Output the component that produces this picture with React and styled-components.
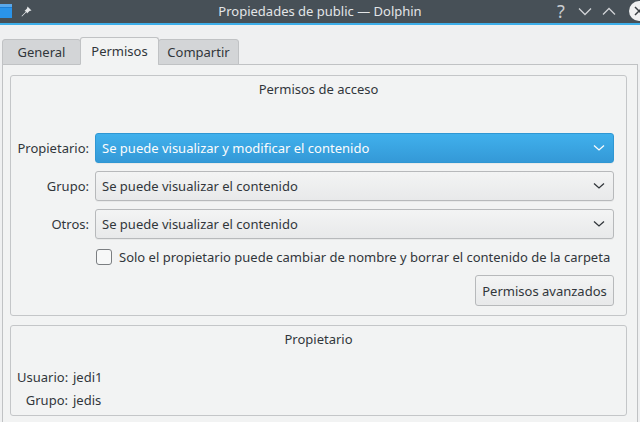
import React from "react";
import styled, { createGlobalStyle } from "styled-components";

const Global = createGlobalStyle`
  html, body { margin: 0; padding: 0; background: #eff0f1; }
  body { font-family: "Noto Sans", "DejaVu Sans", sans-serif; font-size: 13px; color: #31363b; overflow: hidden; }
  * { box-sizing: border-box; }
`;

const Window = styled.div`
  width: 640px;
  height: 422px;
  display: flex;
  flex-direction: column;
  background: #eff0f1;
  overflow: hidden;
`;

const TitleBar = styled.div`
  height: 25px;
  flex: none;
  display: flex;
  align-items: center;
  background: #475057;
  border-bottom: 2px solid #3daee9;
  padding-bottom: 1px;
`;

const TitleLeft = styled.div`
  display: flex;
  align-items: center;
  gap: 8px;
  margin-left: -2px;
`;

const TitleText = styled.div`
  flex: 1;
  text-align: center;
  color: #e3e5e7;
  font-size: 13px;
  padding-left: 54px;
`;

const TitleRight = styled.div`
  display: flex;
  align-items: center;
  gap: 6px;
  margin-right: -9px;
`;

const TitleButton = styled.div`
  width: 18px;
  height: 18px;
  display: flex;
  align-items: center;
  justify-content: center;
  color: #c9cccf;
  font-size: 18px;
  line-height: 18px;
`;

const CloseButton = styled.div`
  width: 20px;
  height: 20px;
  border-radius: 50%;
  background: #f0f1f2;
  display: flex;
  align-items: center;
  justify-content: center;
  margin-left: 5px;
`;

const Body = styled.div`
  flex: 1;
  display: flex;
  flex-direction: column;
  padding: 12px 2px 0 2px;
`;

const TabBar = styled.div`
  display: flex;
  align-items: flex-end;
  height: 28px;
  position: relative;
  z-index: 1;
  margin-bottom: -1px;
`;

const Tab = styled.div`
  width: ${(p) => p.$w}px;
  height: ${(p) => (p.$active ? 28 : 26)}px;
  display: flex;
  align-items: center;
  justify-content: center;
  border: 1px solid #c0c2c4;
  border-bottom: ${(p) => (p.$active ? "1px solid #f2f3f3" : "1px solid #c0c2c4")};
  border-radius: 3px 3px 0 0;
  background: ${(p) => (p.$active ? "#f2f3f3" : "#d3d5d7")};
  color: #31363b;
  font-size: 13px;
  margin-left: ${(p) => (p.$first ? 0 : -1)}px;
  padding-bottom: 1px;
`;

const TabPanel = styled.div`
  flex: 1;
  border: 1px solid #c0c2c4;
  border-bottom: none;
  background: #f2f3f3;
  padding: 10px 10px 0 7px;
  display: flex;
  flex-direction: column;
  gap: 9px;
`;

const GroupBox = styled.div`
  border: 1px solid #c4c6c8;
  border-radius: 3px;
  background: #f2f3f3;
  height: ${(p) => p.$h}px;
  display: flex;
  flex-direction: column;
`;

const GroupTitle = styled.div`
  text-align: center;
  padding-top: 4px;
  height: 26px;
  line-height: 18px;
  font-size: 13px;
`;

const FormGrid = styled.div`
  display: grid;
  grid-template-columns: 72px 1fr;
  column-gap: 6px;
  row-gap: 8px;
  padding: 31px 12px 0 6px;
  align-items: center;
`;

const Label = styled.div`
  text-align: right;
  font-size: 13px;
  white-space: nowrap;
`;

const Combo = styled.div`
  height: 30px;
  border-radius: 3px;
  border: 1px solid ${(p) => (p.$active ? "#2f97d3" : "#b7b9bb")};
  background: ${(p) =>
    p.$active
      ? "linear-gradient(#40b0ec, #3499d7)"
      : "linear-gradient(#f3f4f4, #e8e9ea)"};
  color: ${(p) => (p.$active ? "#fcfcfc" : "#31363b")};
  display: flex;
  align-items: center;
  padding: 0 8px 0 6px;
  box-shadow: 0 1px 0 rgba(0, 0, 0, 0.04);
`;

const ComboText = styled.span`
  flex: 1;
`;

const CheckRow = styled.label`
  grid-column: 2;
  display: flex;
  align-items: center;
  gap: 7px;
  padding-left: 1px;
  margin-top: 1px;
`;

const CheckBox = styled.span`
  width: 16px;
  height: 16px;
  border: 1px solid #7b7e81;
  border-radius: 3px;
  background: #f7f8f8;
  flex: none;
`;

const ButtonRow = styled.div`
  grid-column: 2;
  display: flex;
  justify-content: flex-end;
  margin-top: 1px;
`;

const Button = styled.div`
  height: 31px;
  width: 139px;
  border: 1px solid #b7b9bb;
  border-radius: 3px;
  background: linear-gradient(#f3f4f4, #e8e9ea);
  display: flex;
  align-items: center;
  justify-content: center;
  font-size: 13px;
`;

const InfoGrid = styled.div`
  display: grid;
  grid-template-columns: 51px 1fr;
  column-gap: 5px;
  row-gap: 5px;
  padding: 16px 6px 0 6px;
  line-height: 18px;
`;

const Chevron = ({ color }) => (
  <svg width="12" height="8" viewBox="0 0 12 8">
    <path d="M1 1.5 L6 6 L11 1.5" fill="none" stroke={color} strokeWidth="1.3" />
  </svg>
);

export default function App() {
  return (
    <>
      <Global />
      <Window>
        <TitleBar>
          <TitleLeft>
            <svg width="14" height="16" viewBox="0 0 14 16">
              <rect x="0" y="1" width="14" height="14" rx="1" fill="#1d7fd6" />
              <rect x="0" y="1" width="14" height="3" fill="#5aa8ea" />
              <rect x="0" y="5" width="14" height="10" fill="#2a94ea" />
            </svg>
            <svg width="14" height="14" viewBox="0 0 14 14">
              <path d="M7.5 2.5 L11.5 6.5 L9.5 7 L7 9.5 L6.5 8 L2 12.5 L1.5 12 L6 7.5 L4.5 7 L7 4.5 Z" fill="#e6e8ea" />
            </svg>
          </TitleLeft>
          <TitleText>Propiedades de public — Dolphin</TitleText>
          <TitleRight>
            <TitleButton>?</TitleButton>
            <TitleButton>
              <svg width="14" height="9" viewBox="0 0 14 9">
                <path d="M1 1.5 L7 7.5 L13 1.5" fill="none" stroke="#d0d3d6" strokeWidth="1.3" />
              </svg>
            </TitleButton>
            <TitleButton>
              <svg width="14" height="9" viewBox="0 0 14 9">
                <path d="M1 7.5 L7 1.5 L13 7.5" fill="none" stroke="#d0d3d6" strokeWidth="1.3" />
              </svg>
            </TitleButton>
            <CloseButton>
              <svg width="10" height="10" viewBox="0 0 10 10">
                <path d="M1 1 L9 9 M9 1 L1 9" stroke="#3b4045" strokeWidth="1.5" />
              </svg>
            </CloseButton>
          </TitleRight>
        </TitleBar>
        <Body>
          <TabBar>
            <Tab $w={79} $first>General</Tab>
            <Tab $w={79} $active>Permisos</Tab>
            <Tab $w={81}>Compartir</Tab>
          </TabBar>
          <TabPanel>
            <GroupBox $h={241}>
              <GroupTitle>Permisos de acceso</GroupTitle>
              <FormGrid>
                <Label>Propietario:</Label>
                <Combo $active>
                  <ComboText>Se puede visualizar y modificar el contenido</ComboText>
                  <Chevron color="#fcfcfc" />
                </Combo>
                <Label>Grupo:</Label>
                <Combo>
                  <ComboText>Se puede visualizar el contenido</ComboText>
                  <Chevron color="#31363b" />
                </Combo>
                <Label>Otros:</Label>
                <Combo>
                  <ComboText>Se puede visualizar el contenido</ComboText>
                  <Chevron color="#31363b" />
                </Combo>
                <CheckRow>
                  <CheckBox />
                  <span>Solo el propietario puede cambiar de nombre y borrar el contenido de la carpeta</span>
                </CheckRow>
                <ButtonRow>
                  <Button>Permisos avanzados</Button>
                </ButtonRow>
              </FormGrid>
            </GroupBox>
            <GroupBox $h={91}>
              <GroupTitle>Propietario</GroupTitle>
              <InfoGrid>
                <Label>Usuario:</Label>
                <span>jedi1</span>
                <Label>Grupo:</Label>
                <span>jedis</span>
              </InfoGrid>
            </GroupBox>
          </TabPanel>
        </Body>
      </Window>
    </>
  );
}
